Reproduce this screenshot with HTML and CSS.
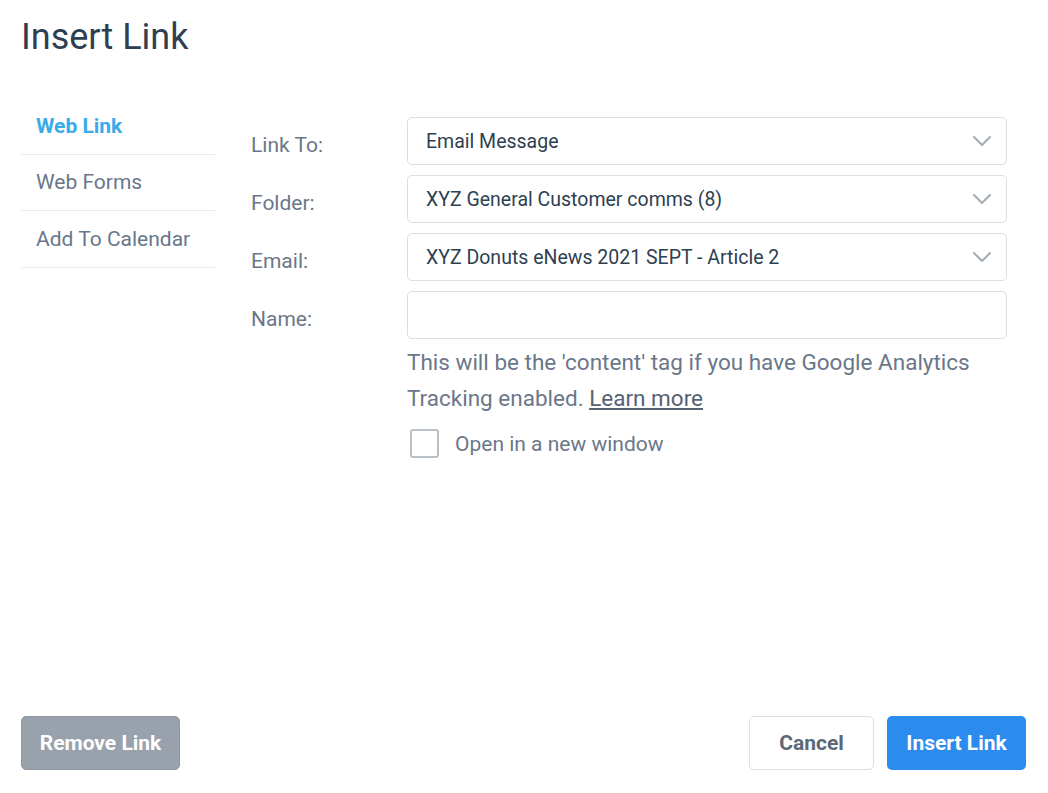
FILE: index.html
```html
<!DOCTYPE html>
<html>
<head>
<meta charset="utf-8">
<link rel="stylesheet" href="styles.css">
</head>
<body>
<div class="page">
  <h1 class="title">Insert Link</h1>
  <div class="main">
    <nav class="sidebar">
      <div class="nav-item active">Web Link</div>
      <div class="nav-item">Web Forms</div>
      <div class="nav-item">Add To Calendar</div>
    </nav>
    <div class="form">
      <div class="row">
        <label class="label">Link To:</label>
        <div class="select"><span>Email Message</span>
          <svg class="chev" width="20" height="12" viewBox="0 0 20 12"><path d="M2 2 L10 10 L18 2" fill="none" stroke="#a3abb4" stroke-width="2" stroke-linecap="round" stroke-linejoin="round"/></svg>
        </div>
      </div>
      <div class="row">
        <label class="label">Folder:</label>
        <div class="select"><span>XYZ General Customer comms (8)</span>
          <svg class="chev" width="20" height="12" viewBox="0 0 20 12"><path d="M2 2 L10 10 L18 2" fill="none" stroke="#a3abb4" stroke-width="2" stroke-linecap="round" stroke-linejoin="round"/></svg>
        </div>
      </div>
      <div class="row">
        <label class="label">Email:</label>
        <div class="select"><span>XYZ Donuts eNews 2021 SEPT - Article 2</span>
          <svg class="chev" width="20" height="12" viewBox="0 0 20 12"><path d="M2 2 L10 10 L18 2" fill="none" stroke="#a3abb4" stroke-width="2" stroke-linecap="round" stroke-linejoin="round"/></svg>
        </div>
      </div>
      <div class="row">
        <label class="label">Name:</label>
        <div class="input"></div>
      </div>
      <div class="row">
        <div class="label"></div>
        <div class="extra">
          <p class="help">This will be the 'content' tag if you have Google Analytics Tracking enabled. <a class="learn">Learn more</a></p>
          <div class="check-row">
            <span class="checkbox"></span>
            <span class="check-label">Open in a new window</span>
          </div>
        </div>
      </div>
    </div>
  </div>
  <div class="footer">
    <button class="btn btn-remove">Remove Link</button>
    <div class="right-btns">
      <button class="btn btn-cancel">Cancel</button>
      <button class="btn btn-insert">Insert Link</button>
    </div>
  </div>
</div>
</body>
</html>
```

FILE: styles.css
```css
* { box-sizing: border-box; }
html, body { margin: 0; padding: 0; background: #fff; }
body { font-family: Roboto, "Liberation Sans", Arial, sans-serif; }
.page {
  width: 1048px;
  height: 793px;
  padding: 0 22px 23px 21px;
  display: flex;
  flex-direction: column;
}
.title {
  margin: 0;
  padding-top: 15px;
  font-size: 36px;
  line-height: 44px;
  font-weight: 400;
  color: #2e3f52;
}
.main {
  flex: 1;
  display: flex;
  gap: 36px;
  padding-top: 39px;
}
.sidebar {
  width: 194px;
  display: flex;
  flex-direction: column;
}
.nav-item {
  height: 56.5px;
  padding-left: 15px;
  display: flex;
  align-items: center;
  border-bottom: 1px solid #e8eaed;
  font-size: 21px;
  color: #69778a;
}
.nav-item.active {
  color: #3aabe9;
  font-weight: 700;
}
.form {
  padding-top: 19px;
  display: flex;
  flex-direction: column;
  gap: 10px;
}
.row {
  display: flex;
}
.label {
  width: 156px;
  padding-top: 15px;
  font-size: 21px;
  line-height: 26px;
  color: #6a7789;
}
.select, .input {
  width: 600px;
  height: 48px;
  border: 1px solid #dadde2;
  border-radius: 5px;
  display: flex;
  align-items: center;
  padding: 0 14px 0 18px;
  font-size: 19.5px;
  color: #2e3f52;
}
.select span { flex: 1; }
.chev { display: block; }
.extra { width: 600px; }
.help {
  margin: -5px 0 0;
  font-size: 22.5px;
  line-height: 36px;
  color: #6a7789;
}
.learn {
  color: #556273;
  text-decoration: underline;
  text-decoration-thickness: 2px;
  text-underline-offset: 2px;
}
.check-row {
  margin-top: 13px;
  display: flex;
  align-items: center;
  gap: 16px;
  padding-left: 3px;
}
.checkbox {
  width: 29px;
  height: 29px;
  border: 2px solid #b9c0c7;
  border-radius: 3px;
}
.check-label {
  font-size: 21px;
  color: #6a7789;
}
.footer {
  display: flex;
  justify-content: space-between;
  align-items: flex-end;
}
.right-btns {
  display: flex;
  gap: 13px;
}
.btn {
  height: 54px;
  border-radius: 5px;
  font-family: Roboto, "Liberation Sans", Arial, sans-serif;
  font-size: 21px;
  font-weight: 700;
  padding: 0;
  border: 1px solid transparent;
}
.btn-remove {
  width: 159px;
  background: #99a1ac;
  border-color: #8e96a1;
  color: #fff;
}
.btn-cancel {
  width: 125px;
  background: #fff;
  border-color: #dcdfe3;
  color: #5c6878;
}
.btn-insert {
  width: 139px;
  background: #2b8cee;
  color: #fff;
}
```
